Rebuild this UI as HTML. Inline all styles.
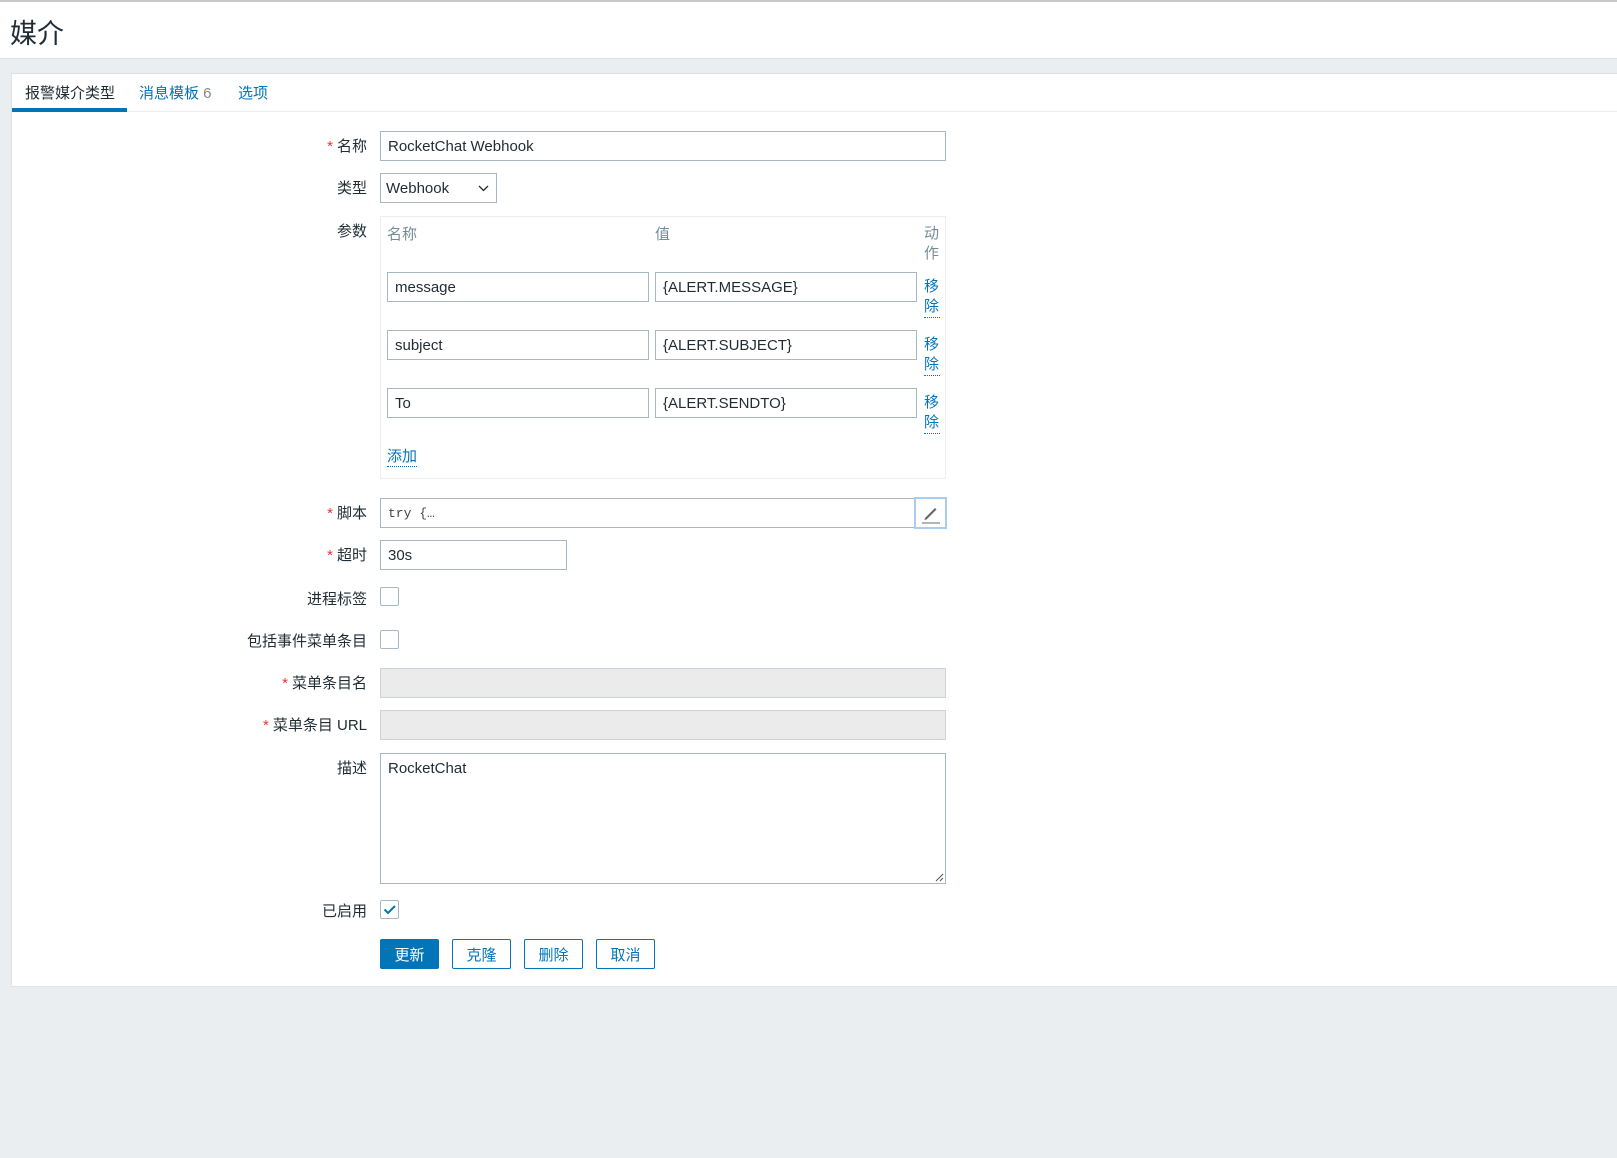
<!DOCTYPE html>
<html><head><meta charset="utf-8"><style>
*{box-sizing:border-box;margin:0;padding:0}
body{width:1617px;height:1158px;background:#ebeef0;font-family:"Liberation Sans","Noto Sans CJK SC",sans-serif;font-size:15px;color:#1f2c33;position:relative;overflow:hidden}
.hdr{position:absolute;left:0;top:0;width:1617px;height:59px;background:#fff;border-top:2px solid #c8c8c8;border-bottom:1px solid #dde1e4}
.hdr h1{position:absolute;left:10px;top:10px;font-size:27px;font-weight:normal;color:#1f2c33}
.panel{position:absolute;left:11px;top:73px;width:1606px;height:914px;background:#fff;border:1px solid #e0e3e6;border-right:none}
.tabs{position:absolute;left:0;top:0;width:100%;height:38px;border-bottom:1px solid #ebeef0}
.tab{position:absolute;top:8px;font-size:15px;color:#0275b8}
.tab.a{color:#1f2c33}
.ul{position:absolute;left:0;top:34px;width:115px;height:4px;background:#0275b8}
.a0{position:absolute}
.lbl{position:absolute;right:1250px;font-size:15px;text-align:right;white-space:nowrap}
.lbl .s{color:#e33;margin-right:4px}
.in{position:absolute;border:1px solid #a8b8c2;background:#fff;padding-left:7px;font-size:15px;display:flex;align-items:center}
.dis{background:#ebebeb;border-color:#ccd3d8}
.cb{position:absolute;width:19px;height:19px;border:1px solid #a8b8c2;border-radius:2px;background:#fff}
.lnk{position:absolute;color:#0275b8;font-size:15px;border-bottom:1px dotted #0275b8;line-height:19px}
.btn{position:absolute;top:939px;height:30px;width:59px;border:1px solid #0275b8;border-radius:2px;color:#0275b8;background:#fff;font-size:15px;display:flex;align-items:center;justify-content:center}
.gray{color:#768d99;position:absolute;font-size:15px}
</style></head><body>
<div class="hdr"><h1>媒介</h1></div>
<div class="panel">
<div class="tabs">
<span class="tab a" style="left:13px">报警媒介类型</span>
<span class="tab" style="left:127px">消息模板 <span style="color:#768d99">6</span></span>
<span class="tab" style="left:226px">选项</span>
<div class="ul"></div>
</div>
</div>

<div class="lbl" style="top:135px;right:1250px"><span class="s">*</span>名称</div>
<div class="in" style="left:380px;top:131px;width:566px;height:30px">RocketChat Webhook</div>

<div class="lbl" style="top:177px">类型</div>
<div class="in" style="left:380px;top:173px;width:117px;height:30px;padding-left:5px">Webhook
<svg style="position:absolute;right:7px;top:11px" width="11" height="7"><path d="M1 1l4.5 4.5L10 1" stroke="#1f2c33" fill="none" stroke-width="1.3"/></svg></div>

<div class="lbl" style="top:220px">参数</div>
<div class="a0" style="left:380px;top:216px;width:566px;height:263px;border:1px solid #ebeef0"></div>
<span class="gray" style="left:387px;top:223px">名称</span>
<span class="gray" style="left:655px;top:223px">值</span>
<span class="gray" style="left:924px;top:224px;width:16px;line-height:20px">动作</span>
<div class="in" style="left:387px;top:272px;width:262px;height:30px">message</div>
<div class="in" style="left:655px;top:272px;width:262px;height:30px">{ALERT.MESSAGE}</div>
<span class="lnk" style="left:924px;top:277px;width:16px;line-height:20px">移除</span>
<div class="in" style="left:387px;top:330px;width:262px;height:30px">subject</div>
<div class="in" style="left:655px;top:330px;width:262px;height:30px">{ALERT.SUBJECT}</div>
<span class="lnk" style="left:924px;top:335px;width:16px;line-height:20px">移除</span>
<div class="in" style="left:387px;top:388px;width:262px;height:30px">To</div>
<div class="in" style="left:655px;top:388px;width:262px;height:30px">{ALERT.SENDTO}</div>
<span class="lnk" style="left:924px;top:393px;width:16px;line-height:20px">移除</span>
<span class="lnk" style="left:387px;top:447px">添加</span>

<div class="lbl" style="top:502px"><span class="s">*</span>脚本</div>
<div class="in" style="left:380px;top:498px;width:535px;height:30px;font-family:'Liberation Mono',monospace;font-size:13px;color:#444">try {…</div>
<div class="a0" style="left:914px;top:497px;width:33px;height:32px;border:2px solid #a9cdf0;background:#fff">
<svg width="29" height="28"><path d="M9 19L19 9l1.5 1.5L10.5 20.5L8.5 21z" fill="#666"/><path d="M6 24h18" stroke="#888" stroke-width="1.2"/></svg></div>

<div class="lbl" style="top:544px"><span class="s">*</span>超时</div>
<div class="in" style="left:380px;top:540px;width:187px;height:30px">30s</div>

<div class="lbl" style="top:588px">进程标签</div>
<div class="cb" style="left:380px;top:587px"></div>
<div class="lbl" style="top:630px">包括事件菜单条目</div>
<div class="cb" style="left:380px;top:630px"></div>

<div class="lbl" style="top:672px"><span class="s">*</span>菜单条目名</div>
<div class="in dis" style="left:380px;top:668px;width:566px;height:30px"></div>
<div class="lbl" style="top:714px"><span class="s">*</span>菜单条目 URL</div>
<div class="in dis" style="left:380px;top:710px;width:566px;height:30px"></div>

<div class="lbl" style="top:757px">描述</div>
<div class="in" style="left:380px;top:753px;width:566px;height:131px;align-items:flex-start;padding-top:6px">RocketChat
<svg style="position:absolute;right:1px;bottom:1px" width="10" height="10"><path d="M9 2L2 9M9 6L6 9" stroke="#555"/></svg></div>

<div class="lbl" style="top:900px">已启用</div>
<div class="cb" style="left:380px;top:900px"><svg width="17" height="17"><path d="M3.5 8.5l3.5 3.5 7-7" stroke="#0275b8" stroke-width="2" fill="none"/></svg></div>

<div class="btn" style="left:380px;background:#0275b8;color:#fff">更新</div>
<div class="btn" style="left:452px">克隆</div>
<div class="btn" style="left:524px">删除</div>
<div class="btn" style="left:596px">取消</div>
</body></html>
